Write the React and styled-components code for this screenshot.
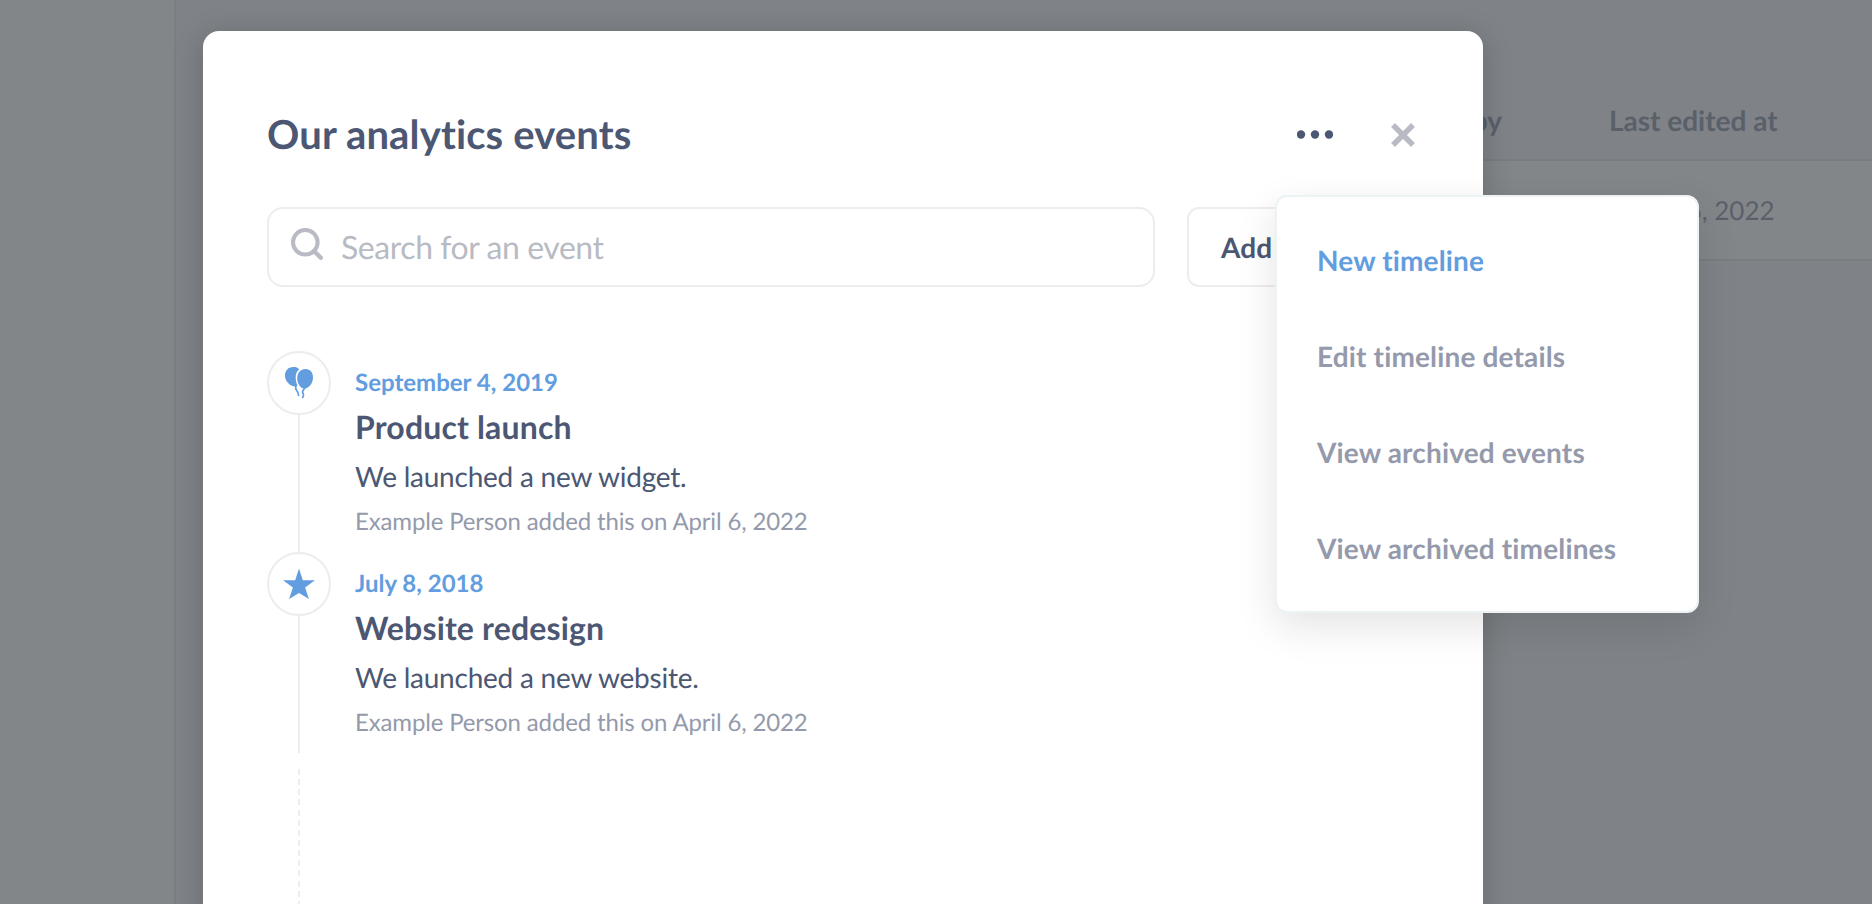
import React from "react";
import styled, { createGlobalStyle } from "styled-components";

const Global = createGlobalStyle`
  * { box-sizing: border-box; }
  body {
    margin: 0;
    font-family: Lato, sans-serif;
    font-variant-ligatures: none;
    text-rendering: geometricPrecision;
    color: #4c5773;
  }
  button, input { font-family: inherit; text-rendering: inherit; }
`;

const Page = styled.div`
  position: relative;
  display: flex;
  height: 904px;
  overflow: hidden;
  background: #7f8387;
`;

const Sidebar = styled.aside`
  width: 176px;
  flex: none;
  background: #828688;
  border-right: 2px solid #7a7e81;
`;

const Main = styled.main`
  flex: 1;
  padding: 82px 0 0 64px;
  color: #5a606a;
`;

const TableRow = styled.div`
  display: grid;
  grid-template-columns: 1fr 263px;
  align-items: center;
  column-gap: 107px;
  height: ${(p) => (p.$head ? "79px" : "100px")};
  padding-bottom: ${(p) => (p.$head ? "1px" : "0")};
  border-bottom: 2px solid #797d81;
  background: ${(p) => (p.$head ? "transparent" : "#828688")};
  font-size: ${(p) => (p.$head ? "28px" : "26px")};
  font-weight: ${(p) => (p.$head ? 700 : 400)};
  white-space: nowrap;
`;

const Cell = styled.span`
  text-align: ${(p) => (p.$end ? "right" : "left")};
  padding-left: ${(p) => p.$indent || 0}px;
`;

const Modal = styled.section`
  position: absolute;
  left: 203px;
  top: 31px;
  width: 1280px;
  height: 960px;
  padding: 64px;
  border-radius: 16px;
  background: #fff;
  box-shadow: 0 4px 30px rgba(0, 0, 0, 0.2);
`;

const Header = styled.header`
  display: flex;
  align-items: center;
  height: 80px;
`;

const Title = styled.h1`
  flex: 1;
  margin: 0;
  padding-bottom: 2px;
  font-size: 40px;
  line-height: 48px;
  font-weight: 700;
  letter-spacing: 0.14px;
`;

const IconButton = styled.button`
  display: flex;
  padding: 0;
  border: 0;
  background: none;
  margin-right: ${(p) => p.$gap || 0}px;
  color: ${(p) => p.$color};
`;

const Toolbar = styled.div`
  display: flex;
  gap: 32px;
  margin-top: 32px;
`;

const SearchBox = styled.label`
  display: flex;
  align-items: center;
  width: 888px;
  height: 80px;
  padding: 0 21px;
  border: 2px solid #eeecec;
  border-radius: 16px;
  color: #b8bbc3;
  svg { margin-bottom: 7px; }
`;

const SearchInput = styled.input`
  flex: 1;
  margin-left: 17px;
  padding: 0 0 2px;
  border: 0;
  outline: 0;
  background: none;
  font-size: 32px;
  letter-spacing: -0.44px;
  color: #4c5773;
  &::placeholder { color: #b8bbc3; opacity: 1; }
`;

const AddButton = styled.button`
  flex: 1;
  height: 80px;
  padding: 0 32px;
  border: 2px solid #f0ecec;
  border-radius: 12px;
  background: #fff;
  color: #4c5773;
  font-size: 28px;
  font-weight: 700;
  letter-spacing: 0.15px;
  text-align: left;
`;

const Timeline = styled.div`
  margin-top: 64px;
`;

const Event = styled.article`
  display: flex;
  height: 201px;
`;

const Rail = styled.div`
  display: flex;
  flex-direction: column;
  align-items: center;
  width: 64px;
  margin-right: 24px;
`;

const Badge = styled.div`
  display: flex;
  align-items: center;
  justify-content: center;
  width: 64px;
  height: 64px;
  border: 2px solid #eeecec;
  border-radius: 50%;
  color: #629ddf;
`;

const Line = styled.div`
  flex: 1;
  width: 2px;
  background: #eeecec;
`;

const DashedLine = styled.div`
  width: 2px;
  height: 200px;
  margin: 16px 0 0 31px;
  background: repeating-linear-gradient(#eeecec 0 6px, transparent 6px 10.15px);
`;

const Body = styled.div`
  padding-top: 17px;
`;

const EventDate = styled.div`
  font-size: 24px;
  line-height: 30px;
  font-weight: 700;
  color: #629ddf;
`;

const EventTitle = styled.h2`
  margin: 9px 0 0;
  font-size: 32px;
  line-height: 40px;
  font-weight: 700;
  letter-spacing: 0.16px;
`;

const Description = styled.p`
  margin: 11px 0 0;
  font-size: 28px;
  line-height: 36px;
  letter-spacing: -0.23px;
`;

const Creator = styled.div`
  margin-top: 13px;
  font-size: 24px;
  line-height: 30px;
  letter-spacing: -0.15px;
  color: #949aab;
`;

const Menu = styled.ul`
  position: absolute;
  left: 1275px;
  top: 195px;
  width: 424px;
  height: 418px;
  margin: 0;
  padding: 16px 0;
  list-style: none;
  border: 2px solid #edf2f5;
  border-radius: 12px;
  background: #fff;
  box-shadow: 0 14px 40px rgba(0, 0, 0, 0.11);
`;

const MenuItem = styled.li`
  display: flex;
  align-items: center;
  height: 96px;
  padding: 0 0 2px 40px;
  font-size: 28px;
  font-weight: 700;
  letter-spacing: 0.15px;
  color: ${(p) => (p.$active ? "#629ddf" : "#949aab")};
`;

const SearchIcon = () => (
  <svg width="34" height="34" viewBox="0 0 34 34" fill="none" stroke="currentColor" strokeWidth="4">
    <circle cx="15.3" cy="15.3" r="12.3" />
    <path d="M24 24l6.8 6.8" strokeWidth="4.4" strokeLinecap="round" />
  </svg>
);

const EllipsisIcon = () => (
  <svg width="36" height="10" viewBox="0 0 36 10" fill="currentColor">
    <circle cx="4" cy="4.500" r="4.200" />
    <circle cx="18" cy="4.500" r="4.200" />
    <circle cx="32" cy="4.500" r="4.200" />
  </svg>
);

const CloseIcon = () => (
  <svg width="24" height="24" viewBox="0 0 24 24" fill="none" stroke="currentColor" strokeWidth="5.4">
    <path d="M2 2l20 20M22 2L2 22" />
  </svg>
);

const BalloonsIcon = () => (
  <svg width="32" height="32" viewBox="0 0 32 32" fill="currentColor">
    <path d="M10 0c3 0 5 .6 6.200 2.400C13.700 4.200 12.600 7.300 12.700 10.800c.1 3.200.8 5.700 1.800 7.600l-1.300 1.200h-1.500C6 18.500 2 13.800 2 8.500 2 3.500 5.500 0 10 0z" />
    <path d="M22.600 2.100c4.800 0 7.600 3.700 7.400 8.700-.2 5.400-3.500 9.700-7.200 10.600l-.8.700-1.300-.5C17.200 20.800 14.200 16.300 14.200 11.200c0-5.200 3.300-9.100 8.400-9.100z" />
    <path d="M12.800 19c-.6 2.500-.2 3.400 1 4.600 1.400 1.500 1.700 3 1.900 5.400M21.200 21.500c-.3 1.700-2 2-1.600 3.700.4 1.600 1.200 1.800.8 3.600l-1 2.400" fill="none" stroke="currentColor" strokeWidth="1.700" />
  </svg>
);

const StarIcon = () => (
  <svg width="32" height="32" viewBox="0 0 32 32" fill="currentColor">
    <path d="M16 .6l3.800 11.600H32l-9.900 7.200 3.800 11.700L16 25 6.100 31.100l3.800-11.700L0 12.200h12.200z" />
  </svg>
);

const events = [
  { icon: <BalloonsIcon />, date: "September 4, 2019", title: "Product launch", text: "We launched a new widget." },
  { icon: <StarIcon />, date: "July 8, 2018", title: "Website redesign", text: "We launched a new website." },
];

const menuItems = ["New timeline", "Edit timeline details", "View archived events", "View archived timelines"];

export default function App() {
  return (
    <Page>
      <Global />
      <Sidebar />
      <Main>
        <TableRow $head>
          <Cell $end>Last edited by</Cell>
          <Cell>Last edited at</Cell>
        </TableRow>
        <TableRow>
          <Cell />
          <Cell $indent={17}>April 6, 2022</Cell>
        </TableRow>
      </Main>
      <Modal>
        <Header>
          <Title>Our analytics events</Title>
          <IconButton $color="#4c5773" $gap={58} aria-label="Timeline options"><EllipsisIcon /></IconButton>
          <IconButton $color="#b8bbc3" $gap={4} aria-label="Close"><CloseIcon /></IconButton>
        </Header>
        <Toolbar>
          <SearchBox>
            <SearchIcon />
            <SearchInput placeholder="Search for an event" />
          </SearchBox>
          <AddButton>Add</AddButton>
        </Toolbar>
        <Timeline>
          {events.map((e) => (
            <Event key={e.title}>
              <Rail>
                <Badge>{e.icon}</Badge>
                <Line />
              </Rail>
              <Body>
                <EventDate>{e.date}</EventDate>
                <EventTitle>{e.title}</EventTitle>
                <Description>{e.text}</Description>
                <Creator>Example Person added this on April 6, 2022</Creator>
              </Body>
            </Event>
          ))}
          <DashedLine />
        </Timeline>
      </Modal>
      <Menu>
        {menuItems.map((label, i) => (
          <MenuItem key={label} $active={i === 0}>{label}</MenuItem>
        ))}
      </Menu>
    </Page>
  );
}
